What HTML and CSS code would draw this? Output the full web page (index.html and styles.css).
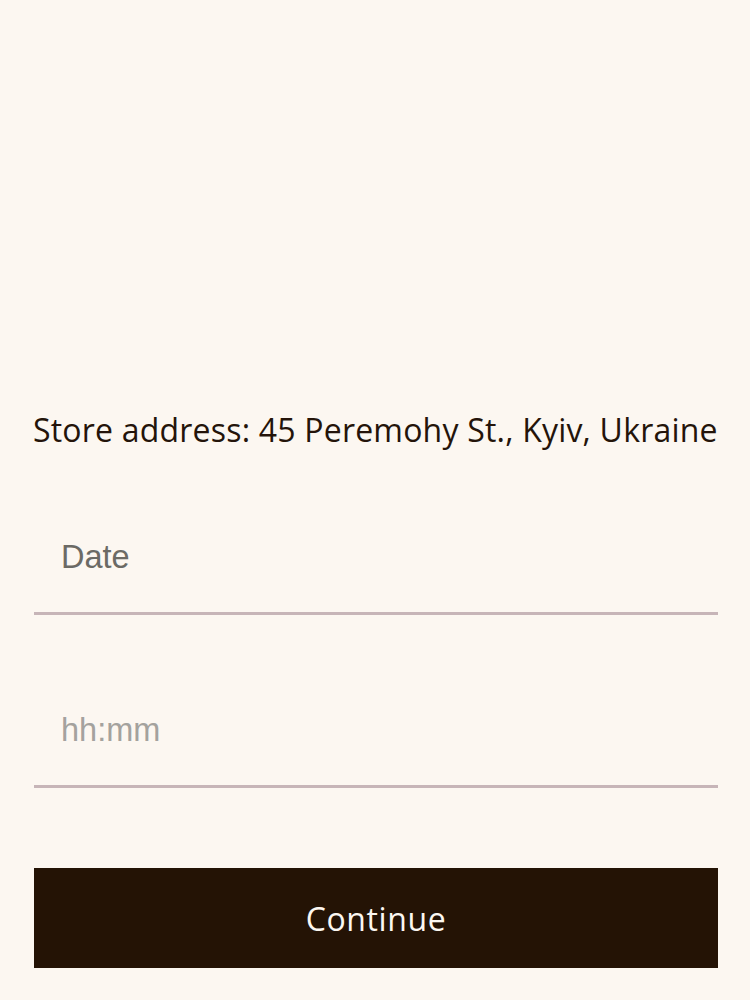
FILE: index.html
```html
<!DOCTYPE html>
<html lang="en">
<head>
<meta charset="utf-8">
<title>Store</title>
<link rel="stylesheet" href="styles.css">
</head>
<body>
<main class="page">
  <p class="address">Store address: 45 Peremohy St., Kyiv, Ukraine</p>
  <form class="form">
    <label class="field">
      <input class="input input-date" type="text" placeholder="Date">
    </label>
    <label class="field">
      <input class="input input-time" type="text" placeholder="hh:mm">
    </label>
    <button class="continue" type="button">Continue</button>
  </form>
</main>
</body>
</html>
```

FILE: styles.css
```css
html, body {
  margin: 0;
  padding: 0;
  background: #fcf7f1;
}

.page {
  box-sizing: border-box;
  width: 750px;
  min-height: 1000px;
  padding: 410px 32px 0 34px;
  display: flex;
  flex-direction: column;
}

.address {
  margin: 0 0 0 -1px;
  font-family: "Open Sans", sans-serif;
  font-size: 32px;
  letter-spacing: 0.2px;
  line-height: 40px;
  color: #24140a;
  white-space: nowrap;
}

.form {
  display: flex;
  flex-direction: column;
  margin-top: 50px;
}

.field {
  display: block;
}

.field + .field {
  margin-top: 58px;
}

.input {
  box-sizing: border-box;
  display: block;
  width: 100%;
  height: 115px;
  padding: 2px 0 0 27px;
  border: none;
  border-bottom: 3px solid #c7b5b8;
  background: transparent;
  font-family: "Liberation Sans", Arial, sans-serif;
  font-size: 32.5px;
  outline: none;
}

.input-date::placeholder {
  color: #6b6a65;
  opacity: 1;
}

.input-time::placeholder {
  color: #a4a29e;
  opacity: 1;
}

.continue {
  margin-top: 80px;
  height: 100px;
  width: 100%;
  border: none;
  background: #241305;
  color: #fcf7f1;
  font-family: "Open Sans", sans-serif;
  font-size: 32px;
  letter-spacing: 0.6px;
  cursor: pointer;
}
```
